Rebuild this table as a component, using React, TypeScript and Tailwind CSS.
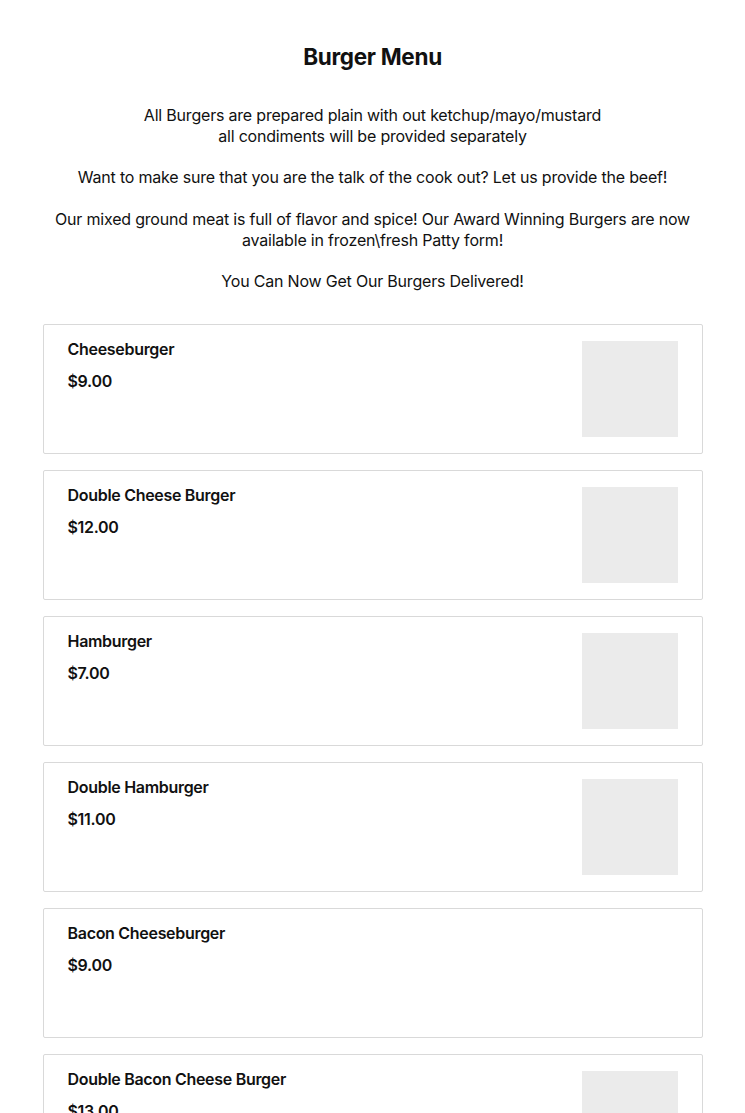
const ITEMS: { name: string; price: string; image: boolean }[] = [
  { name: 'Cheeseburger', price: '$9.00', image: true },
  { name: 'Double Cheese Burger', price: '$12.00', image: true },
  { name: 'Hamburger', price: '$7.00', image: true },
  { name: 'Double Hamburger', price: '$11.00', image: true },
  { name: 'Bacon Cheeseburger', price: '$9.00', image: false },
  { name: 'Double Bacon Cheese Burger', price: '$13.00', image: true },
];

export default function App() {
  return (
    <div
      className="min-h-screen bg-white text-[#111]"
      style={{ fontFamily: 'Inter, "Liberation Sans", sans-serif' }}
    >
      <div className="mx-auto w-[660px] pt-[43px] pb-10">
        <h1 className="text-center text-[22.5px] font-bold leading-[28px] tracking-[-0.3px]">Burger Menu</h1>

        <div className="mt-[34px] text-center text-[16px] leading-[21px] tracking-[-0.2px]">
          <p>
            All Burgers are prepared plain with out ketchup/mayo/mustard
            <br />
            all condiments will be provided separately
          </p>
          <p className="mt-[20px]">Want to make sure that you are the talk of the cook out? Let us provide the beef!</p>
          <p className="mt-[21px]">
            Our mixed ground meat is full of flavor and spice! Our Award Winning Burgers are now available in frozen\fresh Patty form!
          </p>
          <p className="mt-[20px]">You Can Now Get Our Burgers Delivered!</p>
        </div>

        <div className="mt-[32px] flex flex-col gap-4">
          {ITEMS.map((item) => (
            <div
              key={item.name}
              className="flex h-[130px] justify-between rounded-[2px] border border-[#d9d9d9] px-6 py-4"
            >
              <div className="-mt-px flex flex-col">
                <div className="text-[16px] font-semibold leading-[18px] tracking-[-0.3px]">{item.name}</div>
                <div className="mt-[14px] text-[16px] font-semibold leading-[18px] tracking-[-0.3px]">{item.price}</div>
              </div>
              {item.image && <div className="h-24 w-24 shrink-0 bg-[#ebebeb]" />}
            </div>
          ))}
        </div>
      </div>
    </div>
  );
}
